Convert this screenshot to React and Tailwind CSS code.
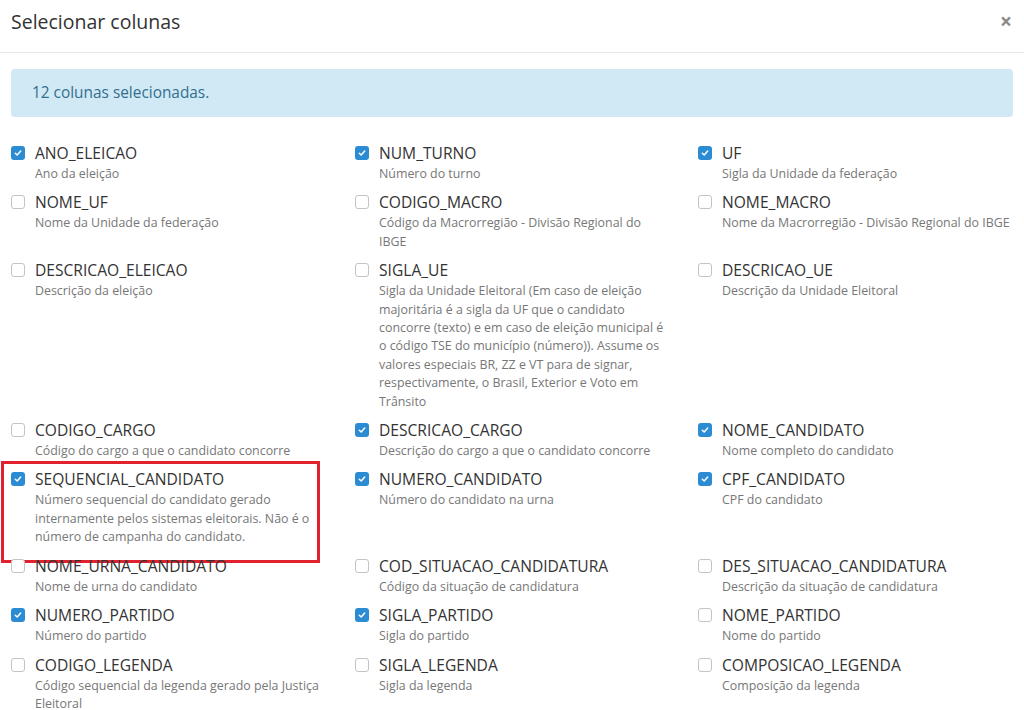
import React from "react";

const rows = [
  [
    { n: "ANO_ELEICAO", d: "Ano da eleição", c: true },
    { n: "NUM_TURNO", d: "Número do turno", c: true },
    { n: "UF", d: "Sigla da Unidade da federação", c: true },
  ],
  [
    { n: "NOME_UF", d: "Nome da Unidade da federação" },
    { n: "CODIGO_MACRO", d: "Código da Macrorregião - Divisão Regional do IBGE" },
    { n: "NOME_MACRO", d: "Nome da Macrorregião - Divisão Regional do IBGE" },
  ],
  [
    { n: "DESCRICAO_ELEICAO", d: "Descrição da eleição" },
    {
      n: "SIGLA_UE",
      d: "Sigla da Unidade Eleitoral (Em caso de eleição majoritária é a sigla da UF que o candidato concorre (texto) e em caso de eleição municipal é o código TSE do município (número)). Assume os valores especiais BR, ZZ e VT para de signar, respectivamente, o Brasil, Exterior e Voto em Trânsito",
    },
    { n: "DESCRICAO_UE", d: "Descrição da Unidade Eleitoral" },
  ],
  [
    { n: "CODIGO_CARGO", d: "Código do cargo a que o candidato concorre" },
    { n: "DESCRICAO_CARGO", d: "Descrição do cargo a que o candidato concorre", c: true },
    { n: "NOME_CANDIDATO", d: "Nome completo do candidato", c: true },
  ],
  [
    {
      n: "SEQUENCIAL_CANDIDATO",
      d: "Número sequencial do candidato gerado internamente pelos sistemas eleitorais. Não é o número de campanha do candidato.",
      c: true,
      mark: true,
    },
    { n: "NUMERO_CANDIDATO", d: "Número do candidato na urna", c: true },
    { n: "CPF_CANDIDATO", d: "CPF do candidato", c: true },
  ],
  [
    { n: "NOME_URNA_CANDIDATO", d: "Nome de urna do candidato" },
    { n: "COD_SITUACAO_CANDIDATURA", d: "Código da situação de candidatura" },
    { n: "DES_SITUACAO_CANDIDATURA", d: "Descrição da situação de candidatura" },
  ],
  [
    { n: "NUMERO_PARTIDO", d: "Número do partido", c: true },
    { n: "SIGLA_PARTIDO", d: "Sigla do partido", c: true },
    { n: "NOME_PARTIDO", d: "Nome do partido" },
  ],
  [
    { n: "CODIGO_LEGENDA", d: "Código sequencial da legenda gerado pela Justiça Eleitoral" },
    { n: "SIGLA_LEGENDA", d: "Sigla da legenda" },
    { n: "COMPOSICAO_LEGENDA", d: "Composição da legenda" },
  ],
];

function Box({ checked }) {
  if (checked) {
    return (
      <span className="flex h-[14px] w-[14px] shrink-0 items-center justify-center rounded-[3px] bg-[#2b8cd3]">
        <svg width="8" height="8" viewBox="0 0 8 8">
          <path d="M1.3 4.2 L3.2 6 L6.7 2" fill="none" stroke="white" strokeWidth="1.5" strokeLinecap="round" strokeLinejoin="round" />
        </svg>
      </span>
    );
  }
  return <span className="h-[14px] w-[14px] shrink-0 rounded-[3px] border border-[#c4c4c4] bg-white" />;
}

function Item({ it, col }) {
  return (
    <div className="relative mb-[9px] flex">
      <div className="flex h-[20px] w-[24px] shrink-0 items-center">
        <Box checked={it.c} />
      </div>
      <div className={col === 2 ? "w-[300px]" : "w-[288px]"}>
        <div className="text-[15.6px] leading-[20px] text-[#333]">{it.n}</div>
        <div className="mt-[2px] text-[12.4px] leading-[18.4px] text-[#777]">{it.d}</div>
      </div>
      {it.mark && (
        <div className="pointer-events-none absolute left-[-10px] top-[-8px] h-[102px] w-[319px] border-[3px] border-[#e2212e]" />
      )}
    </div>
  );
}

export default function App() {
  return (
    <div className="h-[710px] w-[1024px] overflow-hidden bg-white" style={{ fontFamily: '"Open Sans", "Noto Sans", sans-serif' }}>
      <div className="flex h-[53px] items-start justify-between border-b border-[#e8e8e8] pl-[11px] pr-[12px] pt-[8px]">
        <h1 className="text-[19.5px] leading-[28px] text-[#333]">Selecionar colunas</h1>
        <span className="mt-[-1px] text-[21px] font-bold leading-[28px] text-[#8a8a8a]">×</span>
      </div>
      <div className="pl-[11px] pt-[16px]">
        <div className="mr-[11px] flex h-[48px] items-center rounded-[4px] bg-[#d1e8f5] pl-[21px] text-[15.4px] text-[#31708f]">
          12 colunas selecionadas.
        </div>
        <div className="mt-[26px] grid grid-cols-[344px_343px_1fr]">
          {rows.map((r, i) =>
            r.map((it, j) => <Item key={i + "-" + j} it={it} col={j} />)
          )}
        </div>
      </div>
    </div>
  );
}
